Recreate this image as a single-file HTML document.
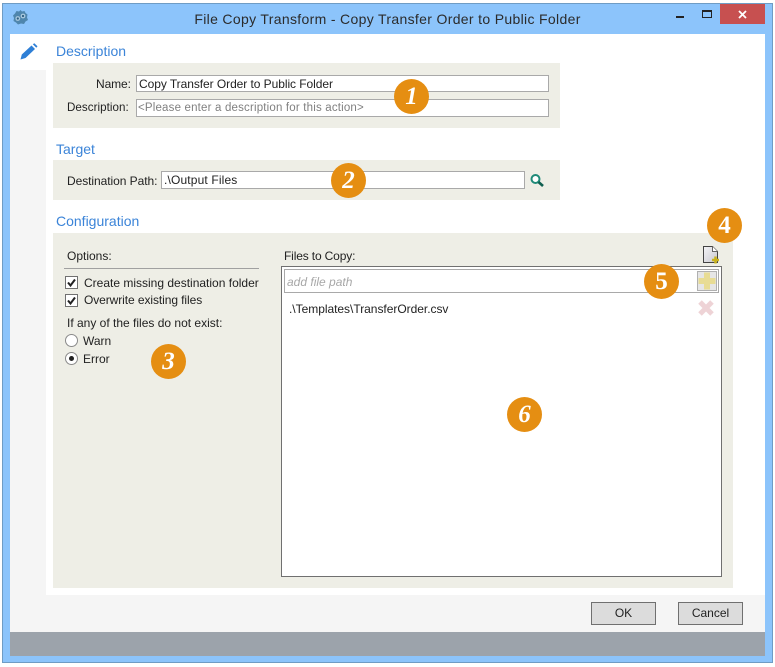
<!DOCTYPE html>
<html><head><meta charset="utf-8">
<style>
html,body{margin:0;padding:0;background:#fff}
#r{position:relative;width:775px;height:667px;overflow:hidden;background:#fff;font-family:"Liberation Sans",sans-serif;font-size:12px;color:#222}
#r div{position:absolute;box-sizing:border-box}
.t{white-space:nowrap;line-height:16px;height:16px}
.h{font-size:14px;color:#3b84d8;white-space:nowrap;line-height:18px;height:18px}
.p{background:#eeeee6}
.i{background:#fff;border:1px solid #a9a9a9;padding-left:2px;line-height:17px;white-space:nowrap;color:#222}
.c{width:35px;height:35px;border-radius:50%;background:#e58e12;color:#fff;font:bold 25px/35px "Liberation Serif",serif;text-align:center}
.b{background:#dcdcdc;border:1px solid #707070;text-align:center;line-height:21px;color:#222}
.k{width:13px;height:13px;background:#fff;border:1px solid #707070}
.o{width:13px;height:13px;background:#fff;border:1px solid #8a8a8a;border-radius:50%}
</style></head><body>
<div id="r">
<div style="left:2px;top:3px;width:771px;height:660px;background:#8cc4fb;border:1px solid #6f9cc4"></div>
<svg style="position:absolute;left:12px;top:9px" width="17" height="17" viewBox="0 0 17 17"><path d="M8.500 1L10 2.500L12.500 2L13.500 4L15.500 5.500L15 8.500L16 11L13.500 12.500L12 15L9 14.500L6 15.500L4 13.500L1.500 12L2 9L1 6.500L3 4.500L4.500 2L7 2.500Z" fill="#4f86ad"/><circle cx="5.800" cy="9.500" r="2.400" fill="#a9c8dc"/><circle cx="11" cy="7" r="2.400" fill="#a9c8dc"/><circle cx="5.800" cy="9.500" r="1.100" fill="#2d5d80"/><circle cx="11" cy="7" r="1.100" fill="#2d5d80"/></svg>
<div class="t" style="left:0;width:775px;top:11px;text-align:center;font-size:14px;color:#2b2b2b;letter-spacing:.33px">File Copy Transform - Copy Transfer Order to Public Folder</div>
<div style="left:676px;top:16px;width:8px;height:2px;background:#222"></div>
<div style="left:702px;top:10px;width:10px;height:8px;border:1px solid #222;border-top-width:2px"></div>
<div style="left:720px;top:4px;width:45px;height:20px;background:#c75050"></div>
<svg style="position:absolute;left:738px;top:10px" width="9" height="9" viewBox="0 0 9 9"><path d="M1 1L8 8M8 1L1 8" stroke="#fff" stroke-width="1.800"/></svg>

<div style="left:10px;top:34px;width:755px;height:622px;background:#fff"></div>
<div style="left:10px;top:70px;width:36px;height:562px;background:#f5f5f5"></div>
<div style="left:10px;top:595px;width:755px;height:37px;background:#f5f5f5"></div>
<div style="left:10px;top:632px;width:755px;height:24px;background:#9ca3ab"></div>
<svg style="position:absolute;left:20px;top:43px" width="18" height="17" viewBox="0 0 18 17"><path d="M0.500 16.500L1.800 11.500L11.500 2.500L15 6L5.500 15Z" fill="#2e7fd6"/><path d="M12.800 1.300L14.300 0.300L17.500 3.200L16.300 4.700Z" fill="#2e7fd6"/></svg>

<div class="h" style="left:56px;top:42px">Description</div>
<div class="p" style="left:53px;top:63px;width:507px;height:65px"></div>
<div class="t" style="left:96px;top:76px;letter-spacing:-.1px">Name:</div>
<div class="t" style="left:67px;top:100px;font-size:11.600px;letter-spacing:.05px">Description:</div>
<div class="i" style="left:136px;top:75px;width:413px;height:17px;line-height:16px;letter-spacing:-.06px">Copy Transfer Order to Public Folder</div>
<div class="i" style="left:136px;top:99px;width:413px;height:18px;color:#808080;font-size:11.500px;padding-left:1px;letter-spacing:.18px">&lt;Please enter a description for this action&gt;</div>

<div class="h" style="left:56px;top:140px">Target</div>
<div class="p" style="left:53px;top:160px;width:507px;height:40px"></div>
<div class="t" style="left:67px;top:173px;letter-spacing:-.06px">Destination Path:</div>
<div class="i" style="left:161px;top:171px;width:364px;height:18px;letter-spacing:.15px">.\Output Files</div>
<svg style="position:absolute;left:529px;top:173px" width="16" height="15" viewBox="0 0 16 15"><circle cx="6.500" cy="6" r="4" fill="#fff" stroke="#1f8a78" stroke-width="2"/><path d="M9.500 9L14 13" stroke="#0f5f50" stroke-width="2.600"/></svg>

<div class="h" style="left:56px;top:212px">Configuration</div>
<div class="p" style="left:53px;top:233px;width:680px;height:355px"></div>
<div class="t" style="left:67px;top:248px">Options:</div>
<div style="left:64px;top:268px;width:195px;height:1px;background:#a0a0a0"></div>
<div class="k" style="left:65px;top:276px"></div>
<div class="k" style="left:65px;top:294px"></div>
<svg style="position:absolute;left:65px;top:276px" width="13" height="31" viewBox="0 0 13 31"><path d="M3 6.500L5.500 9.500L10 3.500M3 24.500L5.500 27.500L10 21.500" fill="none" stroke="#222" stroke-width="2"/></svg>
<div class="t" style="left:84px;top:275px">Create missing destination folder</div>
<div class="t" style="left:84px;top:292px;letter-spacing:-.08px">Overwrite existing files</div>
<div class="t" style="left:67px;top:315px">If any of the files do not exist:</div>
<div class="o" style="left:65px;top:334px"></div>
<div class="o" style="left:65px;top:352px"></div>
<div style="left:69px;top:356px;width:5px;height:5px;border-radius:50%;background:#222"></div>
<div class="t" style="left:83px;top:333px">Warn</div>
<div class="t" style="left:83px;top:351px">Error</div>

<div class="t" style="left:284px;top:248px;letter-spacing:-.15px">Files to Copy:</div>
<svg style="position:absolute;left:702px;top:245px" width="18" height="19" viewBox="0 0 18 19"><defs><linearGradient id="g" x1="0" y1="0" x2="1" y2="1"><stop offset="0" stop-color="#f4f4f6"/><stop offset="1" stop-color="#c8c8d0"/></linearGradient></defs><path d="M1.500 1.500H10.500L15.500 6.500V17.500H1.500Z" fill="url(#g)" stroke="#444"/><path d="M10.500 1.500V6.500H15.500" fill="#fff" stroke="#666"/><path d="M10 15H17M13.500 11.500V18.500" stroke="#c9b21c" stroke-width="2.500"/></svg>
<div style="left:281px;top:266px;width:441px;height:311px;background:#fff;border:1px solid #707070"></div>
<div class="i" style="left:284px;top:269px;width:435px;height:24px;line-height:24px;color:#a8a8a8;font-style:italic">add file path</div>
<div style="left:697px;top:271px;width:20px;height:20px;background:#e6e6e6;border:1px solid #b0b0b0"></div>
<svg style="position:absolute;left:697px;top:271px" width="20" height="20" viewBox="0 0 20 20"><path d="M10 1.500V18.500M1.500 10H18.500" stroke="#e8dc94" stroke-width="6"/></svg>
<div class="t" style="left:289px;top:301px;letter-spacing:-.03px">.\Templates\TransferOrder.csv</div>
<svg style="position:absolute;left:697px;top:299px" width="18" height="18" viewBox="0 0 18 18"><path d="M3 3L15 15M15 3L3 15" stroke="#eed3d6" stroke-width="5"/></svg>

<div class="b" style="left:591px;top:602px;width:65px;height:23px">OK</div>
<div class="b" style="left:678px;top:602px;width:65px;height:23px">Cancel</div>

<div class="c" style="left:394px;top:79px;font-style:italic">1</div>
<div class="c" style="left:331px;top:163px;font-style:italic">2</div>
<div class="c" style="left:151px;top:344px;font-style:italic">3</div>
<div class="c" style="left:707px;top:208px">4</div>
<div class="c" style="left:644px;top:264px">5</div>
<div class="c" style="left:507px;top:397px;font-style:italic">6</div>
</div>
</body></html>
